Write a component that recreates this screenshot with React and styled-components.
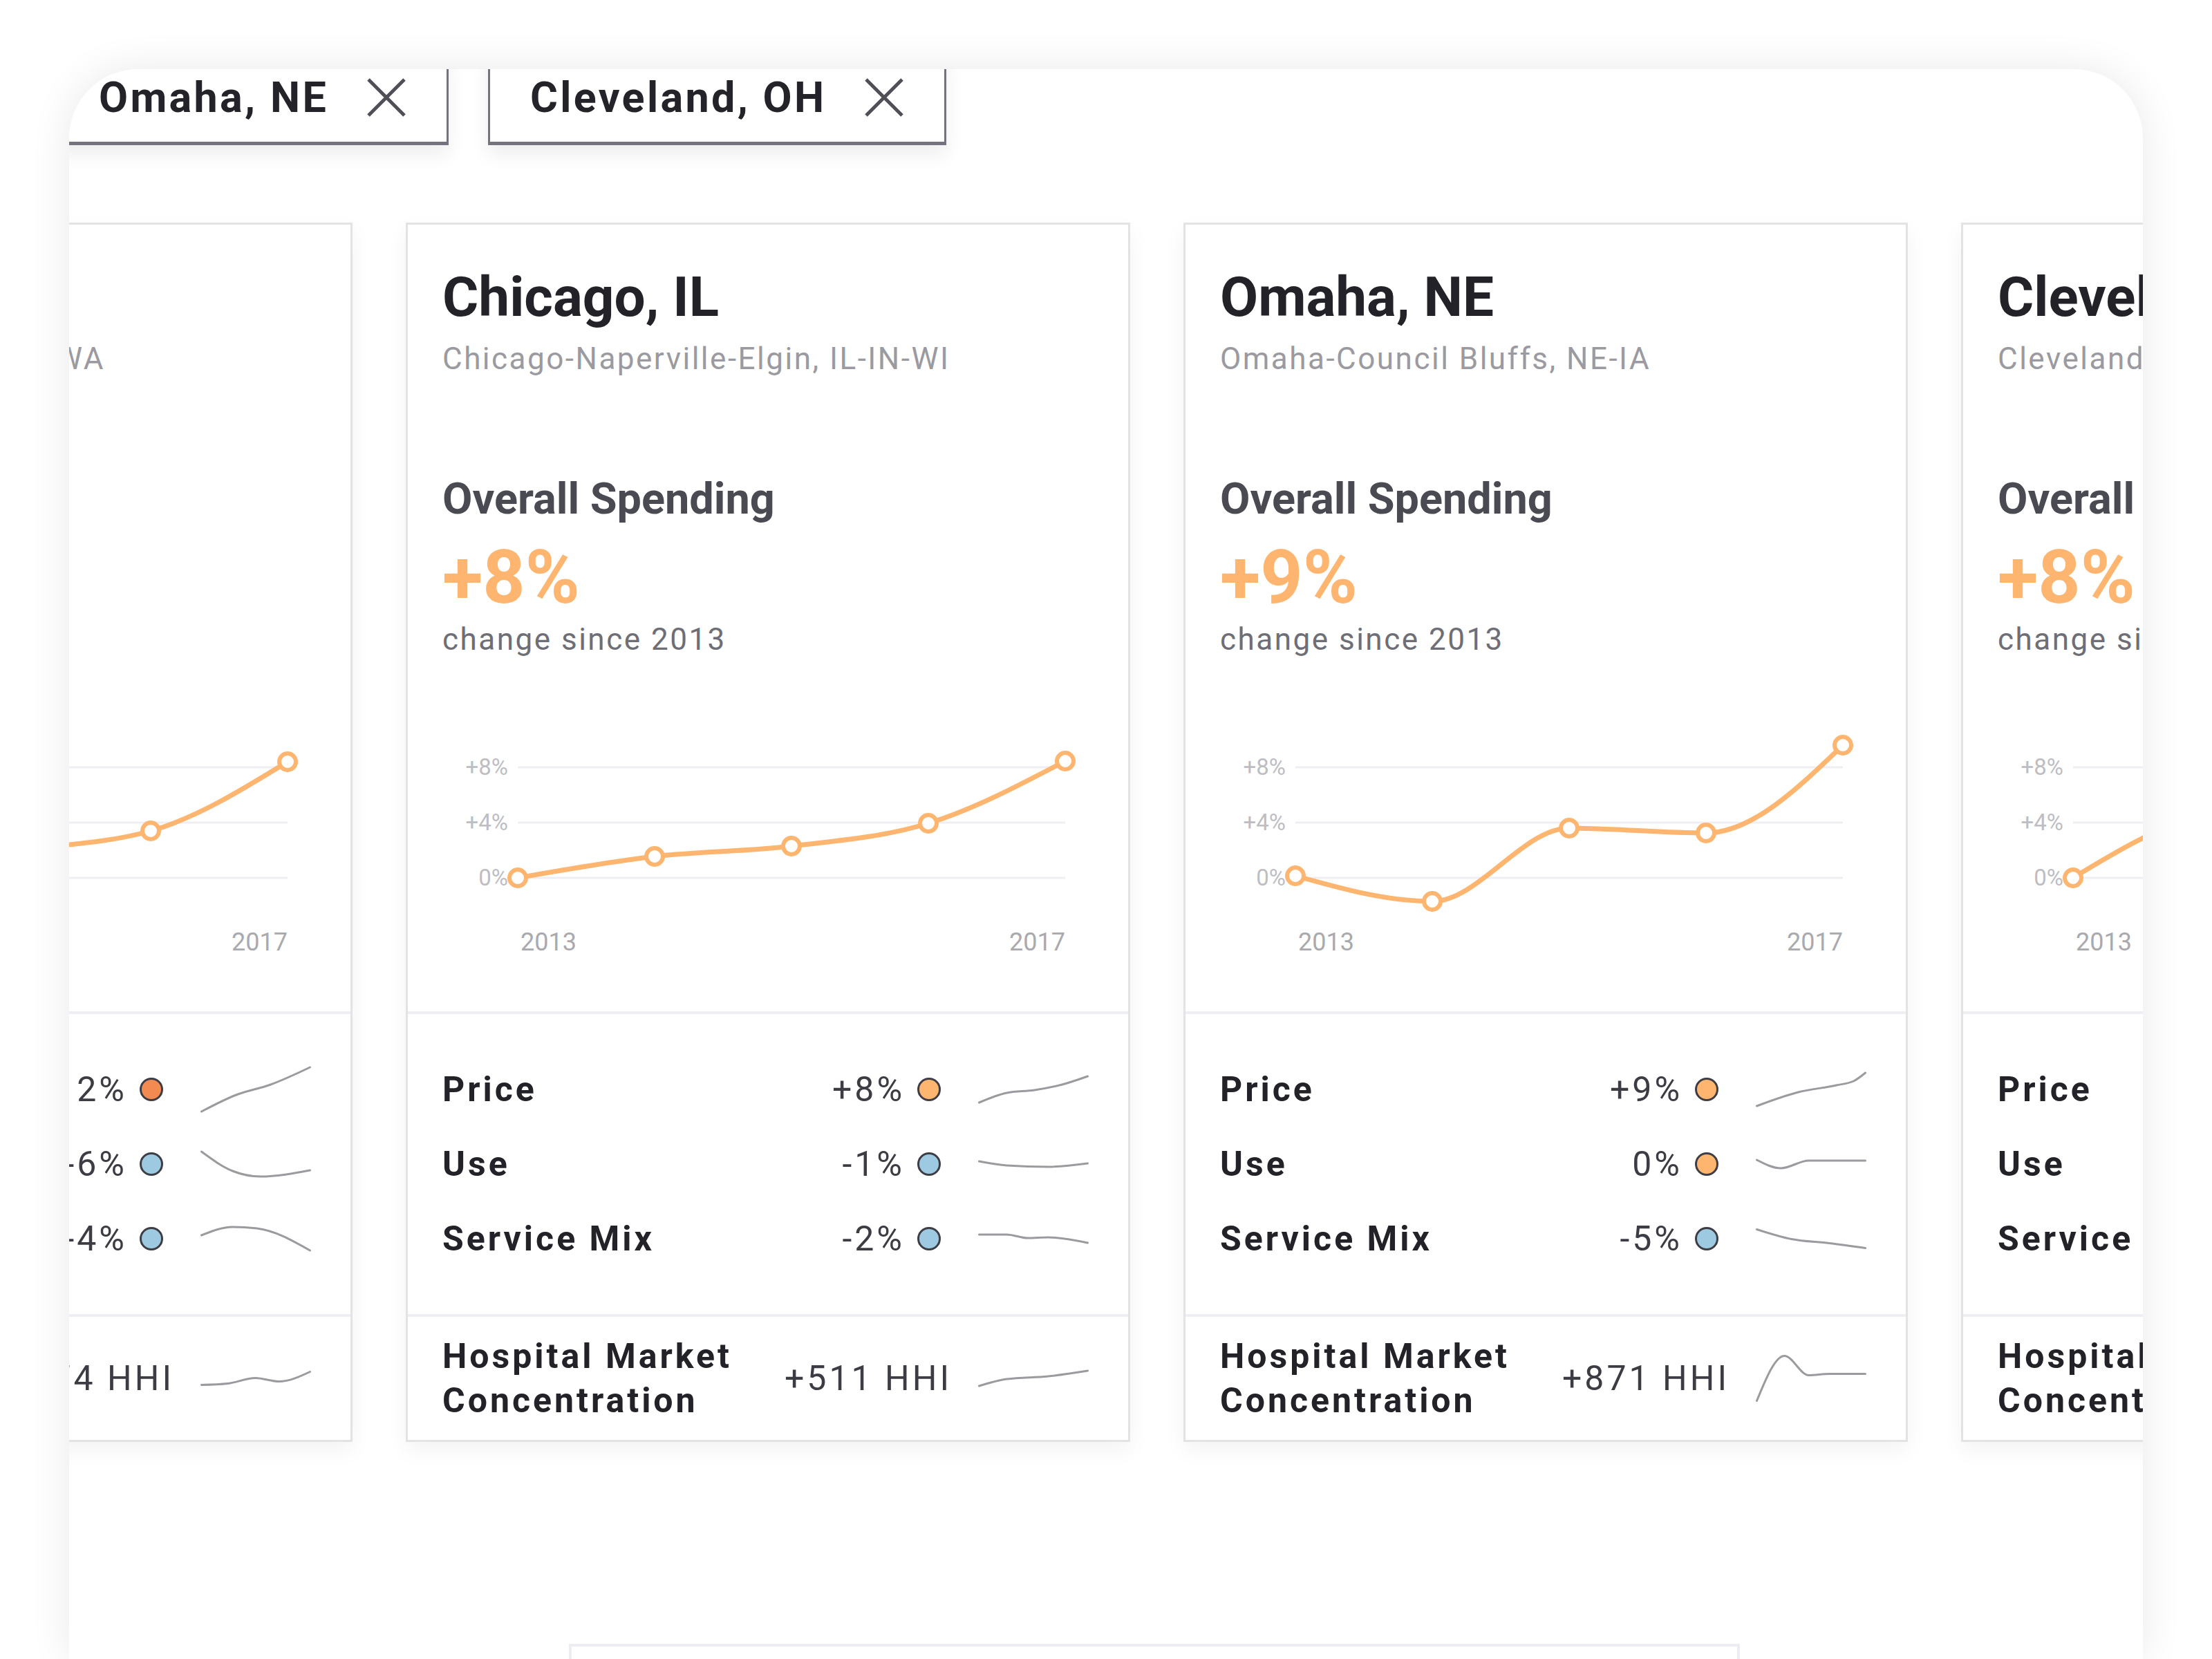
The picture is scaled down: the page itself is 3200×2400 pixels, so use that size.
import React from "react";
import styled, { createGlobalStyle } from "styled-components";

const GlobalStyle = createGlobalStyle`
  html, body {
    margin: 0;
    padding: 0;
    background: #ffffff;
  }
  body {
    font-family: Roboto, "Noto Sans", sans-serif;
  }
`;

const ORANGE = "#fdb56f";

const cities = [
  {
    name: "Seattle, WA",
    metro: "Seattle-Tacoma-Bellevue, WA",
    change: "+8%",
    trend: [0, 1, 2, 3.4, 8.4],
    rows: [
      { label: "Price", value: "+12%", dot: "#f28a52", spark: [[0, 64], [50, 40], [100, 25], [157, 0]] },
      { label: "Use", value: "-6%", dot: "#9ecae1", spark: [[0, 0], [45, 28], [85, 36], [157, 27]] },
      { label: "Service Mix", value: "-4%", dot: "#9ecae1", spark: [[0, 12], [45, 0], [80, 2], [157, 34]] },
    ],
    hhi: { value: "+174 HHI", spark: [[0, 19], [38, 17], [78, 9], [112, 14], [157, 0]] },
  },
  {
    name: "Chicago, IL",
    metro: "Chicago-Naperville-Elgin, IL-IN-WI",
    change: "+8%",
    trend: [0, 1.55, 2.3, 3.95, 8.45],
    rows: [
      { label: "Price", value: "+8%", dot: ORANGE, spark: [[0, 38], [40, 24], [80, 20], [120, 12], [157, 0]] },
      { label: "Use", value: "-1%", dot: "#9ecae1", spark: [[0, 0], [40, 6], [100, 8], [157, 3]] },
      { label: "Service Mix", value: "-2%", dot: "#9ecae1", spark: [[0, 0], [40, 0], [70, 5], [100, 4], [157, 12]] },
    ],
    hhi: { value: "+511 HHI", spark: [[0, 22], [40, 12], [100, 8], [157, 0]] },
  },
  {
    name: "Omaha, NE",
    metro: "Omaha-Council Bluffs, NE-IA",
    change: "+9%",
    trend: [0.15, -1.7, 3.6, 3.25, 9.6],
    rows: [
      { label: "Price", value: "+9%", dot: ORANGE, spark: [[0, 48], [60, 28], [115, 18], [140, 12], [157, 0]] },
      { label: "Use", value: "0%", dot: ORANGE, spark: [[0, 0], [35, 12], [75, 1], [157, 1]] },
      { label: "Service Mix", value: "-5%", dot: "#9ecae1", spark: [[0, 0], [50, 14], [105, 20], [157, 27]] },
    ],
    hhi: { value: "+871 HHI", spark: [[0, 65], [40, 0], [75, 28], [105, 26], [157, 26]] },
  },
  {
    name: "Cleveland, OH",
    metro: "Cleveland-Elyria, OH",
    change: "+8%",
    trend: [0, 4.5, 5.2, 6.1, 8],
    rows: [
      { label: "Price", value: "+7%", dot: ORANGE, spark: [[0, 30], [80, 15], [157, 0]] },
      { label: "Use", value: "+2%", dot: ORANGE, spark: [[0, 10], [80, 4], [157, 0]] },
      { label: "Service Mix", value: "-1%", dot: "#9ecae1", spark: [[0, 0], [80, 6], [157, 10]] },
    ],
    hhi: { value: "+205 HHI", spark: [[0, 12], [80, 6], [157, 0]] },
  },
];

function monotonePath(pts) {
  const n = pts.length;
  const h = [];
  const s = [];
  for (let i = 0; i < n - 1; i++) {
    h[i] = pts[i + 1][0] - pts[i][0];
    s[i] = (pts[i + 1][1] - pts[i][1]) / h[i];
  }
  const m = new Array(n);
  for (let i = 1; i < n - 1; i++) {
    const p = (s[i - 1] * h[i] + s[i] * h[i - 1]) / (h[i - 1] + h[i]);
    m[i] =
      (Math.sign(s[i - 1]) + Math.sign(s[i])) *
        Math.min(Math.abs(s[i - 1]), Math.abs(s[i]), 0.5 * Math.abs(p)) || 0;
  }
  m[0] = n > 2 ? (3 * s[0] - m[1]) / 2 : s[0];
  m[n - 1] = n > 2 ? (3 * s[n - 2] - m[n - 2]) / 2 : s[n - 2];
  let d = `M${pts[0][0]},${pts[0][1]}`;
  for (let i = 0; i < n - 1; i++) {
    const dx = h[i] / 3;
    d += ` C${pts[i][0] + dx},${pts[i][1] + m[i] * dx} ${pts[i + 1][0] - dx},${
      pts[i + 1][1] - m[i + 1] * dx
    } ${pts[i + 1][0]},${pts[i + 1][1]}`;
  }
  return d;
}

const Page = styled.div`
  width: 3200px;
  height: 2400px;
  padding-top: 100px;
  box-sizing: border-box;
  overflow: hidden;
  background: #ffffff;
`;

const Panel = styled.div`
  margin-left: 100px;
  width: 3000px;
  height: 2300px;
  background: #ffffff;
  border-radius: 100px 100px 0 0;
  overflow: hidden;
  box-shadow: 0 0 60px rgba(0, 0, 0, 0.09);
`;

const TabRow = styled.div`
  display: flex;
  gap: 57px;
  margin: -27px 0 0 -18px;
`;

const Tab = styled.div`
  display: flex;
  align-items: center;
  flex: none;
  box-sizing: border-box;
  height: 137px;
  padding: 4px 57px 0 58px;
  border: 3px solid #74747e;
  border-top: none;
  border-bottom-width: 5px;
  background: #ffffff;
  box-shadow: 0 14px 26px rgba(0, 0, 0, 0.07);
  font-weight: 700;
  font-size: 61px;
  line-height: 1;
  letter-spacing: 0.055em;
  color: #232329;
`;

const CloseIcon = styled.svg`
  margin-left: 54px;
  flex: none;
`;

const Track = styled.div`
  display: flex;
  gap: 77px;
  margin: 112px 0 0 -638px;
`;

const Card = styled.div`
  flex: none;
  width: 1048px;
  box-sizing: border-box;
  border: 3px solid #e3e3e6;
  background: #ffffff;
  box-shadow: 0 12px 30px rgba(0, 0, 0, 0.05);
`;

const Header = styled.div`
  padding-top: 65px;
`;

const TextBlock = styled.div`
  padding-left: 50px;
  white-space: nowrap;
`;

const Title = styled.div`
  font-weight: 700;
  font-size: 80px;
  line-height: 80px;
  color: #222228;
`;

const Metro = styled.div`
  margin-top: 27px;
  font-size: 44px;
  line-height: 44px;
  letter-spacing: 2.5px;
  color: #9a9aa0;
`;

const MetricLabel = styled.div`
  margin-top: 149px;
  font-weight: 700;
  font-size: 63px;
  line-height: 64px;
  color: #4a4a52;
`;

const BigChange = styled.div`
  margin-top: 30px;
  font-weight: 700;
  font-size: 107px;
  line-height: 104px;
  color: ${ORANGE};
`;

const Since = styled.div`
  margin-top: 15px;
  font-size: 44px;
  line-height: 44px;
  letter-spacing: 2.5px;
  color: #6e6e76;
`;

const ChartSvg = styled.svg`
  display: block;
`;

const Metrics = styled.div`
  box-sizing: border-box;
  height: 438px;
  padding-top: 55px;
  border-top: 4px solid #efeff3;
`;

const Concentration = styled.div`
  box-sizing: border-box;
  height: 182px;
  display: flex;
  align-items: center;
  border-top: 4px solid #efeff3;
`;

const Row = styled.div`
  display: flex;
  align-items: center;
  width: 100%;
  box-sizing: border-box;
  min-height: 108px;
  padding: 0 57px 0 50px;
  white-space: nowrap;
`;

const RowLabel = styled.div`
  flex: 1;
  font-weight: 700;
  font-size: 50px;
  line-height: 64px;
  letter-spacing: 4px;
  color: #222228;
  white-space: ${(p) => (p.$wrap ? "normal" : "nowrap")};
  max-width: ${(p) => (p.$wrap ? "460px" : "none")};
`;

const RowValue = styled.div`
  margin-left: auto;
  font-size: 50px;
  line-height: 64px;
  letter-spacing: 4px;
  color: #3c3c44;
`;

const Dot = styled.span`
  flex: none;
  width: 28px;
  height: 28px;
  margin: 0 16px 0 18px;
  border-radius: 50%;
  border: 3px solid #3d3d45;
  background: ${(p) => p.$color};
`;

const SparkSvg = styled.svg`
  flex: none;
  margin-left: 38px;
  display: block;
`;

const X0 = 159;
const STEP = 198;
const BASE = 323;
const PER = 20;

function TrendChart({ values }) {
  const pts = values.map((v, i) => [X0 + i * STEP, BASE - v * PER]);
  return (
    <ChartSvg width="1042" height="516" viewBox="0 0 1042 516">
      {[8, 4, 0].map((g) => (
        <g key={g}>
          <line x1={X0} x2={951} y1={BASE - g * PER} y2={BASE - g * PER} stroke="#efeff3" strokeWidth="3" />
          <text
            x="145"
            y={BASE - g * PER + 11}
            textAnchor="end"
            fontFamily="Roboto, sans-serif"
            fontSize="33"
            fill="#bdbdc2"
          >
            {g === 0 ? "0%" : `+${g}%`}
          </text>
        </g>
      ))}
      <text x="163" y="428" fontFamily="Roboto, sans-serif" fontSize="36" fill="#a9a9ae">
        2013
      </text>
      <text x="951" y="428" textAnchor="end" fontFamily="Roboto, sans-serif" fontSize="36" fill="#a9a9ae">
        2017
      </text>
      <path d={monotonePath(pts)} fill="none" stroke={ORANGE} strokeWidth="7" strokeLinecap="round" />
      {pts.map(([x, y], i) => (
        <circle key={i} cx={x} cy={y} r="12" fill="#ffffff" stroke={ORANGE} strokeWidth="6" />
      ))}
    </ChartSvg>
  );
}

function Sparkline({ points }) {
  const ys = points.map((p) => p[1]);
  const off = 40 - (Math.min(...ys) + Math.max(...ys)) / 2;
  const pts = points.map(([x, y]) => [x + 1.5, y + off]);
  return (
    <SparkSvg width="160" height="80" viewBox="0 0 160 80">
      <path d={monotonePath(pts)} fill="none" stroke="#9b9b9f" strokeWidth="3" strokeLinecap="round" />
    </SparkSvg>
  );
}

function CityCard({ city }) {
  return (
    <Card>
      <Header>
        <TextBlock>
          <Title>{city.name}</Title>
          <Metro>{city.metro}</Metro>
          <MetricLabel>Overall Spending</MetricLabel>
          <BigChange>{city.change}</BigChange>
          <Since>change since 2013</Since>
        </TextBlock>
        <TrendChart values={city.trend} />
      </Header>
      <Metrics>
        {city.rows.map((r) => (
          <Row key={r.label}>
            <RowLabel>{r.label}</RowLabel>
            <RowValue>{r.value}</RowValue>
            <Dot $color={r.dot} />
            <Sparkline points={r.spark} />
          </Row>
        ))}
      </Metrics>
      <Concentration>
        <Row>
          <RowLabel $wrap>Hospital Market Concentration</RowLabel>
          <RowValue>{city.hhi.value}</RowValue>
          <Sparkline points={city.hhi.spark} />
        </Row>
      </Concentration>
    </Card>
  );
}

const NextBox = styled.div`
  margin: 292px 0 0 723px;
  width: 1694px;
  height: 120px;
  box-sizing: border-box;
  border: 4px solid #ececf1;
  border-bottom: none;
`;

function Close() {
  return (
    <CloseIcon width="60" height="60" viewBox="0 0 60 60">
      <path d="M4 4 L56 56 M56 4 L4 56" stroke="#4f4f57" strokeWidth="5" strokeLinecap="butt" />
    </CloseIcon>
  );
}

export default function App() {
  return (
    <Page>
      <GlobalStyle />
      <Panel>
        <TabRow>
          <Tab>
            Omaha, NE
            <Close />
          </Tab>
          <Tab>
            Cleveland, OH
            <Close />
          </Tab>
        </TabRow>
        <Track>
          {cities.map((c) => (
            <CityCard key={c.name} city={c} />
          ))}
        </Track>
        <NextBox />
      </Panel>
    </Page>
  );
}
